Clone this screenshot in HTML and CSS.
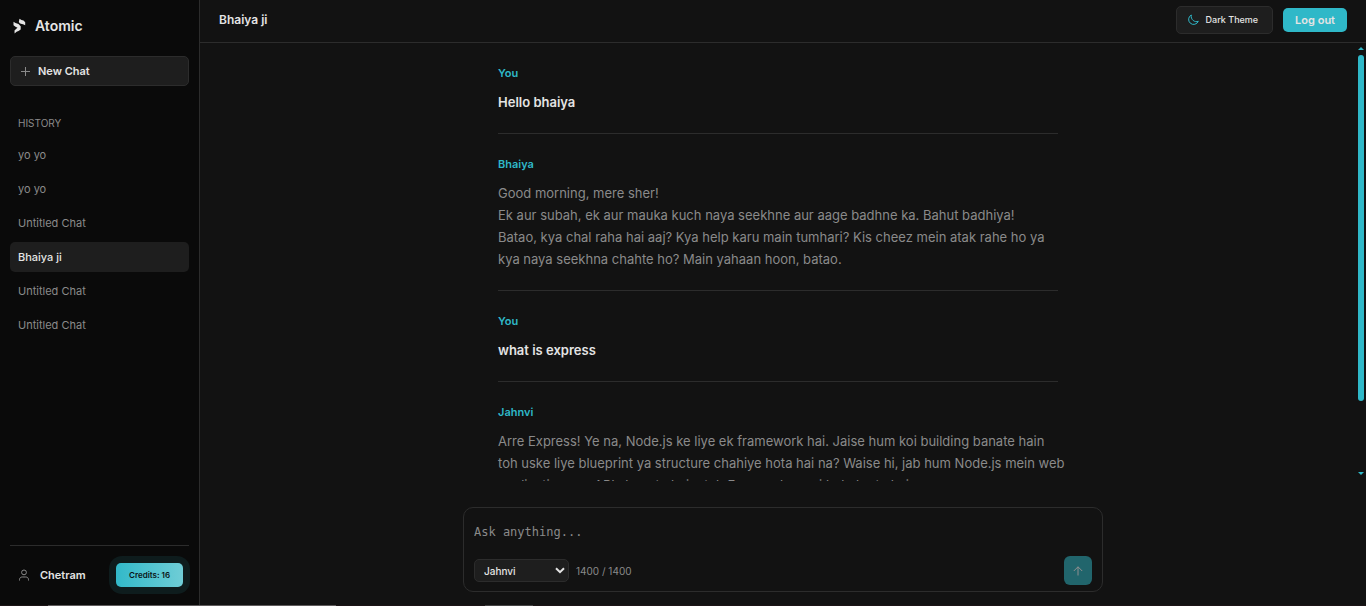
FILE: index.html
```html
<!DOCTYPE html>
<html lang="en">
<head>
<meta charset="utf-8">
<meta name="viewport" content="width=device-width, initial-scale=1">
<title>Atomic</title>
<link rel="stylesheet" href="styles.css">
</head>
<body>
<div class="app">
  <aside class="sidebar">
    <div class="brand">
      <svg class="brand-logo" viewBox="0 0 13 16" aria-hidden="true"><path d="M6.500.8 8.500 2 10.500 2.600 12.200 4.300V7.200L10 6.300 7 5.600 5.800 3.900Z"/><path d="M.5 3.800 2.500 4.900 5.500 5.900 7.700 8.200V11.400L5.500 13 3.600 13.800 1.600 15.500 1.500 12.500 3.300 10.800 4.500 9.700 2.500 8.700.5 7.200Z"/></svg>
      <span>Atomic</span>
    </div>
    <button class="new-chat" type="button">
      <svg class="icon-plus" viewBox="0 0 9 9" aria-hidden="true"><path d="M4.500 0v9M0 4.500h9"/></svg>
      New Chat
    </button>
    <nav class="history">
      <h2 class="history-title">HISTORY</h2>
      <a class="history-item" href="#">yo yo</a>
      <a class="history-item" href="#">yo yo</a>
      <a class="history-item" href="#">Untitled Chat</a>
      <a class="history-item active" href="#">Bhaiya ji</a>
      <a class="history-item" href="#">Untitled Chat</a>
      <a class="history-item" href="#">Untitled Chat</a>
    </nav>
    <footer class="account">
      <svg class="icon-user" viewBox="0 0 12 12" aria-hidden="true"><circle cx="6" cy="3.4" r="2.4"/><path d="M1.500 11.500v-.8C1.500 8.900 2.800 8 4.200 8h3.600c1.400 0 2.700.9 2.700 2.700v.8"/></svg>
      <span class="account-name">Chetram</span>
      <span class="credits"><span class="credits-pill">Credits: 16</span></span>
    </footer>
  </aside>
  <main class="main">
    <header class="topbar">
      <h1 class="topbar-title">Bhaiya ji</h1>
      <button class="theme-button" type="button">
        <svg class="icon-moon" viewBox="0 0 12 12" aria-hidden="true"><path d="M4.300 1A5 5 0 1 0 11.300 7.200C8 9 3.300 5.500 4.300 1Z"/></svg>
        Dark Theme
      </button>
      <button class="logout-button" type="button">Log out</button>
    </header>
    <div class="chat">
      <div class="messages">
        <article class="message">
          <h3 class="author">You</h3>
          <p class="question">Hello bhaiya</p>
        </article>
        <article class="message">
          <h3 class="author">Bhaiya</h3>
          <p class="answer">Good morning, mere sher!<br>Ek aur subah, ek aur mauka kuch naya seekhne aur aage badhne ka. Bahut badhiya!<br>Batao, kya chal raha hai aaj? Kya help karu main tumhari? Kis cheez mein atak rahe ho ya<br>kya naya seekhna chahte ho? Main yahaan hoon, batao.</p>
        </article>
        <article class="message">
          <h3 class="author">You</h3>
          <p class="question">what is express</p>
        </article>
        <article class="message">
          <h3 class="author">Jahnvi</h3>
          <p class="answer">Arre Express! Ye na, Node.js ke liye ek framework hai. Jaise hum koi building banate hain<br>toh uske liye blueprint ya structure chahiye hota hai na? Waise hi, jab hum Node.js mein web<br>applications ya APIs banate hain, toh Express humari help karta hai.</p>
        </article>
      </div>
      <div class="scrollbar" aria-hidden="true">
        <svg class="scroll-arrow" viewBox="0 0 6 3"><path d="M0 3L3 0L6 3Z"/></svg>
        <div class="scroll-track"><div class="scroll-thumb"></div></div>
        <svg class="scroll-arrow" viewBox="0 0 6 3"><path d="M0 0H6L3 3Z"/></svg>
      </div>
    </div>
    <form class="composer">
      <textarea class="prompt" rows="1" placeholder="Ask anything..." aria-label="Message"></textarea>
      <div class="composer-row">
        <div class="select-wrap">
          <select class="persona" aria-label="Persona"><option>Jahnvi</option><option>Bhaiya</option></select>
          <svg class="chevron" viewBox="0 0 10 7" aria-hidden="true"><path d="M1 1.200L5 5.200L9 1.200"/></svg>
        </div>
        <span class="counter">1400 / 1400</span>
        <button class="send" type="button" aria-label="Send">
          <svg class="icon-send" viewBox="0 0 10 10" aria-hidden="true"><path d="M5 9.500V.8M.8 5L5 .8L9.200 5"/></svg>
        </button>
      </div>
    </form>
  </main>
</div>
<div class="bottom-edge" aria-hidden="true"><span class="edge-long"></span><span class="edge-short"></span></div>
</body>
</html>
```
FILE: styles.css
```css
:root {
  --side: #0a0a0a;
  --bg: #121212;
  --surface: #1e1e1e;
  --line: #2c2c2c;
  --text: #e4e4e4;
  --muted: #8a8a8a;
  --accent: #2fb8c8;
}
* { box-sizing: border-box; }
body {
  margin: 0;
  height: 100vh;
  display: flex;
  flex-direction: column;
  overflow: hidden;
  background: var(--bg);
  color: var(--text);
  font-family: Inter, "Liberation Sans", sans-serif;
}
button, select { font-family: inherit; }
h1, h2, h3, p { margin: 0; }
svg { display: block; flex: none; fill: none; }

.app { flex: 1; min-height: 0; display: flex; }

.sidebar {
  width: 200px;
  flex: none;
  display: flex;
  flex-direction: column;
  padding: 16px 10px 0;
  background: var(--side);
  border-right: 1px solid var(--line);
}
.brand {
  display: flex;
  align-items: center;
  gap: 9px;
  padding-left: 3px;
  font-size: 14px;
  line-height: 20px;
  font-weight: 600;
}
.brand-logo { width: 13px; height: 16px; fill: var(--text); }
.new-chat {
  display: flex;
  align-items: center;
  gap: 8px;
  height: 30px;
  margin-top: 20px;
  padding: 0 10px;
  background: var(--surface);
  border: 1px solid var(--line);
  border-radius: 5px;
  color: var(--text);
  font-size: 11px;
  font-weight: 600;
}
.icon-plus { width: 9px; height: 9px; stroke: var(--muted); }
.history { flex: 1; display: flex; flex-direction: column; gap: 4px; padding-top: 29px; }
.history-title {
  padding-left: 8px;
  font-size: 10px;
  line-height: 17px;
  font-weight: 400;
  color: var(--muted);
  margin-bottom: 4px;
}
.history-item {
  padding: 0 8px;
  line-height: 30px;
  border-radius: 5px;
  color: var(--muted);
  font-size: 11px;
  text-decoration: none;
}
.history-item.active { background: var(--surface); color: var(--text); font-weight: 500; }
.account {
  display: flex;
  align-items: center;
  height: 60px;
  padding: 0 0 1px 8px;
  border-top: 1px solid var(--line);
}
.icon-user { width: 12px; height: 12px; stroke: var(--muted); }
.account-name { flex: 1; margin-left: 10px; font-size: 11px; font-weight: 600; }
.credits { margin-right: -1px; padding: 7px; border-radius: 13px; background: #0e1c1d; }
.credits-pill {
  display: block;
  padding: 0 13px;
  border-radius: 5px;
  background: linear-gradient(90deg, #32b9c9, #6fcdd6);
  color: #0a1416;
  font-size: 8px;
  line-height: 24px;
  font-weight: 600;
  white-space: nowrap;
}

.main { flex: 1; min-width: 0; display: flex; flex-direction: column; }
.topbar {
  display: flex;
  align-items: center;
  gap: 10px;
  height: 43px;
  flex: none;
  padding: 0 19px 3px;
  border-bottom: 1px solid var(--line);
}
.topbar-title { flex: 1; font-size: 12px; font-weight: 600; }
.theme-button, .logout-button { display: flex; align-items: center; border-radius: 5px; color: var(--text); }
.theme-button {
  gap: 7px;
  height: 28px;
  padding: 0 14px 0 10px;
  background: var(--surface);
  border: 1px solid var(--line);
  font-size: 9px;
  font-weight: 500;
}
.icon-moon { width: 12px; height: 12px; stroke: var(--accent); }
.logout-button { height: 24px; padding: 0 12px; background: var(--accent); border: 0; font-size: 11px; font-weight: 600; }

.chat { flex: 1; min-height: 0; display: flex; }
.messages { flex: 1; overflow: hidden; }
.message {
  width: 560px;
  max-width: 100%;
  margin: 0 auto;
  padding: 21px 0 20px;
  border-bottom: 1px solid var(--line);
}
.author { margin-bottom: 9px; color: var(--accent); font-size: 11px; line-height: 18px; font-weight: 600; }
.question, .answer { font-size: 13px; line-height: 22px; }
.question { font-weight: 600; }
.answer { margin-right: -12px; color: var(--muted); }
.scrollbar { width: 10px; display: flex; flex-direction: column; align-items: center; padding: 4px 0 6px; gap: 5px; }
.scroll-arrow { width: 6px; height: 3px; fill: var(--accent); }
.scroll-track { flex: 1; width: 6px; }
.scroll-thumb { height: 84%; border-radius: 3px; background: var(--accent); }

.composer {
  width: 640px;
  max-width: 100%;
  margin: 26px auto 13px;
  padding: 10px 10px 6px;
  border: 1px solid var(--line);
  border-radius: 10px;
}
.prompt {
  display: block;
  width: 100%;
  height: 28px;
  margin-bottom: 10px;
  padding: 5px 0;
  border: 0;
  background: none;
  resize: none;
  overflow: hidden;
  color: var(--text);
  font: 12px/18px "DejaVu Sans Mono", monospace;
}
.prompt::placeholder { color: var(--muted); }
.composer-row { display: flex; align-items: center; gap: 7px; }
.select-wrap { display: grid; align-items: center; }
.persona, .chevron { grid-area: 1 / 1; }
.persona {
  appearance: none;
  width: 95px;
  height: 23px;
  padding: 0 9px;
  background: var(--surface);
  border: 1px solid var(--line);
  border-radius: 5px;
  color: var(--text);
  font-size: 10px;
  font-weight: 500;
}
.chevron { width: 10px; height: 7px; justify-self: end; margin-right: 4px; stroke: var(--text); stroke-width: 2; pointer-events: none; }
.counter { flex: 1; font-size: 10px; color: var(--muted); }
.send {
  display: grid;
  place-items: center;
  width: 28px;
  height: 29px;
  padding: 0;
  border: 0;
  border-radius: 6px;
  background: #21656c;
}
.icon-send { width: 10px; height: 10px; stroke: #8f8f8f; }
.bottom-edge { display: flex; height: 1px; flex: none; padding-left: 48px; gap: 149px; background: #1c1416; }
.edge-long { width: 288px; background: #5e5a5b; }
.edge-short { width: 48px; background: #454344; }
```
